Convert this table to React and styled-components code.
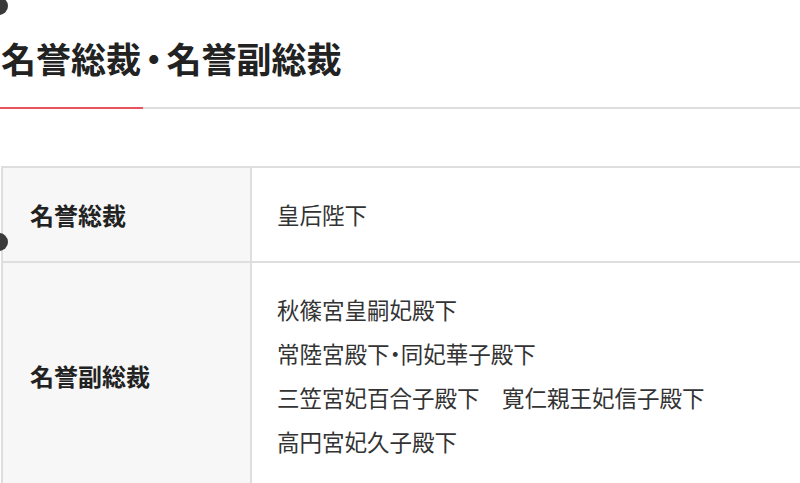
import React from 'react';
import styled, { createGlobalStyle } from 'styled-components';

const GlobalStyle = createGlobalStyle`
  html, body {
    margin: 0;
    padding: 0;
    background: #fff;
    overflow: hidden;
  }
  body {
    font-family: "Noto Sans CJK JP", "Noto Sans", sans-serif;
    color: #333;
  }
`;

/* ── Page & heading ── */
const Page = styled.div`
  position: relative;
  width: 800px;
  height: 483px;
  padding-top: 32px;
  box-sizing: border-box;
  overflow: hidden;
`;

const Title = styled.h2`
  margin: 0;
  padding-left: 1px;
  font-size: 35px;
  line-height: 51px;
  font-weight: 700;
  color: #222;
  white-space: nowrap;
`;

// half-width middle dot (halt), with a little air on the heading
const Sep = styled.span`
  font-feature-settings: "halt";
  margin: 0 ${({ $gap }) => $gap || 0}px;
`;

const Rule = styled.div`
  margin-top: 24px;
  height: 2px;
  background: #dddddd;
  display: flex;
`;

const RuleAccent = styled.span`
  width: 143px;
  background: #e8535d;
`;

/* ── Table ── */
const Table = styled.div`
  margin-top: 57px;
  margin-left: 1px;
  width: 920px;
  border-left: 2px solid #dedede;
`;

const Row = styled.div`
  display: grid;
  grid-template-columns: 249px 1fr;
  border-top: 2px solid #dedede;
`;

const Label = styled.div`
  display: flex;
  align-items: center;
  box-sizing: border-box;
  padding-left: 27px;
  background: #f7f7f7;
  border-right: 2px solid #dedede;
  font-size: 24px;
  font-weight: 700;
  color: #222;
`;

const Value = styled.div`
  padding: 24px 0 25px 25px;
  font-size: 22.5px;
  line-height: 44px;
  color: #333;
`;

const Line = styled.div`
  white-space: nowrap;
`;

/* ── Overlay dots from the capture ── */
const Dot = styled.span`
  position: absolute;
  left: -10px;
  top: ${({ $top }) => $top}px;
  width: 18px;
  height: 18px;
  border-radius: 50%;
  background: #3a3a3a;
`;

export default function App() {
  return (
    <>
      <GlobalStyle />
      <Page>
        <Title>
          名誉総裁<Sep $gap={4}>・</Sep>名誉副総裁
        </Title>
        <Rule>
          <RuleAccent />
        </Rule>
        <Table>
          <Row>
            <Label>名誉総裁</Label>
            <Value>
              <Line>皇后陛下</Line>
            </Value>
          </Row>
          <Row>
            <Label>名誉副総裁</Label>
            <Value>
              <Line>秋篠宮皇嗣妃殿下</Line>
              <Line>
                常陸宮殿下<Sep>・</Sep>同妃華子殿下
              </Line>
              <Line>三笠宮妃百合子殿下　寛仁親王妃信子殿下</Line>
              <Line>高円宮妃久子殿下</Line>
            </Value>
          </Row>
        </Table>
        <Dot $top={-3} />
        <Dot $top={233} />
      </Page>
    </>
  );
}
